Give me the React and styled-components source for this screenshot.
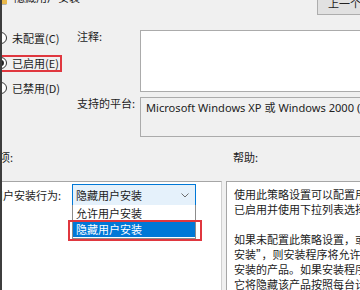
import React from 'react';
import styled, { createGlobalStyle } from 'styled-components';

const Global = createGlobalStyle`
  html, body { margin: 0; padding: 0; }
  body {
    width: 360px;
    height: 290px;
    overflow: hidden;
    background: #f0f0f0;
    font-family: "Noto Sans CJK SC", "Noto Sans", sans-serif;
  }
`;

const Dialog = styled.div`
  width: 360px;
  height: 290px;
  box-sizing: border-box;
  border-left: 2px solid #3d3d3d;
  background: #f0f0f0;
  overflow: hidden;
  display: flex;
  flex-direction: column;
  font-size: 11px;
  line-height: 12px;
  color: #1c1c1c;
`;

const TitleBar = styled.div`
  height: 16px;
  display: flex;
  align-items: flex-start;
  flex-shrink: 0;
`;

const TitleIcon = styled.svg`
  width: 12px;
  height: 12px;
  margin: -7px 0 0 -6px;
  flex-shrink: 0;
`;

const TitleText = styled.div`
  margin: -9px 0 0 6px;
  font-size: 11px;
  color: #222;
`;

const NavButton = styled.div`
  margin: -10px -20px 0 auto;
  width: 63px;
  height: 25px;
  box-sizing: border-box;
  border: 1px solid #adadad;
  background: #e1e1e1;
  display: flex;
  align-items: center;
  justify-content: flex-start;
  padding-left: 10px;
  color: #222;
`;

const Upper = styled.div`
  display: flex;
  padding-top: 14px;
  flex-shrink: 0;
`;

const RadioGroup = styled.div`
  width: 75px;
  flex-shrink: 0;
  display: flex;
  flex-direction: column;
  gap: 9px;
`;

const RadioRow = styled.div`
  position: relative;
  display: flex;
  align-items: center;
  gap: 5px;
  height: 16px;
  margin-left: -7px;
  &::after {
    content: '';
    display: ${(p) => (p.$marked ? 'block' : 'none')};
    position: absolute;
    left: 5px;
    top: 0;
    width: 62px;
    height: 17px;
    box-sizing: border-box;
    border: 2px solid #e0373f;
  }
`;

const RadioCircle = styled.span`
  width: 12px;
  height: 12px;
  box-sizing: border-box;
  border-radius: 50%;
  border: 1px solid #333;
  background: #fff;
  display: flex;
  align-items: center;
  justify-content: center;
  flex-shrink: 0;
  &::before {
    content: '';
    display: ${(p) => (p.$checked ? 'block' : 'none')};
    width: 6px;
    height: 6px;
    border-radius: 50%;
    background: #222;
  }
`;

const Form = styled.div`
  flex: 1;
  display: grid;
  grid-template-columns: 63px 1fr;
  grid-template-rows: 62px 40px;
  row-gap: 5px;
  margin-right: -12px;
`;

const FieldLabel = styled.div`
  padding-top: 0;
  line-height: 12px;
`;

const TextArea = styled.div`
  background: #fff;
  border: 1px solid #ababab;
`;

const ReadOnlyBox = styled.div`
  background: #f0f0f0;
  border: 1px solid #ababab;
  padding: 4px 0 0 5px;
  white-space: nowrap;
  overflow: hidden;
  font-family: "Noto Sans", "Noto Sans CJK SC", sans-serif;
  font-size: 11.1px;
  color: #222;
`;

const SectionRow = styled.div`
  display: grid;
  grid-template-columns: 220px 1fr;
  column-gap: 4px;
  margin-top: 14px;
  height: 12px;
  flex-shrink: 0;
`;

const SectionLabel = styled.div`
  margin-left: ${(p) => p.$offset || 0}px;
  white-space: nowrap;
`;

const Panes = styled.div`
  display: grid;
  grid-template-columns: 220px 1fr;
  column-gap: 4px;
  margin-top: 18px;
  height: 130px;
  flex-shrink: 0;
  margin-right: -20px;
`;

const OptionsPane = styled.div`
  background: #fff;
  border-top: 1px solid #a6a6a6;
  border-right: 1px solid #cfcfcf;
  padding-top: 2px;
`;

const OptionRow = styled.div`
  display: flex;
  align-items: center;
`;

const OptionLabel = styled.div`
  flex: 0 0 80px;
  margin-left: -10px;
  white-space: nowrap;
`;

const Combo = styled.div`
  position: relative;
  width: 124px;
  height: 22px;
  box-sizing: border-box;
  border: 1px solid #0078d7;
  background: #e5f1fb;
  display: flex;
  align-items: center;
  padding: 0 6px 0 3px;
`;

const ComboText = styled.span`
  flex: 1;
  color: #1a1a1a;
`;

const Chevron = styled.svg`
  width: 8px;
  height: 5px;
`;

const DropList = styled.div`
  position: absolute;
  top: 100%;
  left: -1px;
  width: 124px;
  box-sizing: border-box;
  background: #fff;
  border: 1px solid #8c8c8c;
  border-top: none;
  padding-bottom: 1px;
  z-index: 2;
`;

const DropItem = styled.div`
  position: relative;
  height: 16px;
  display: flex;
  align-items: center;
  padding-left: 3px;
  background: ${(p) => (p.$selected ? '#0078d7' : 'transparent')};
  color: ${(p) => (p.$selected ? '#fff' : '#1a1a1a')};
  &::after {
    content: '';
    display: ${(p) => (p.$marked ? 'block' : 'none')};
    position: absolute;
    left: -5px;
    right: -7px;
    top: -1px;
    bottom: -4px;
    border: 2px solid #e0373f;
  }
`;

const HelpPane = styled.div`
  background: #fff;
  border: 1px solid #a6a6a6;
  padding: 5px 0 0 7px;
  line-height: 15px;
  overflow: hidden;
`;

const HelpLine = styled.div`
  white-space: nowrap;
  min-height: 15px;
`;

const helpLines = [
  '使用此策略设置可以配置用户安装',
  '已启用并使用下拉列表选择显示',
  '',
  '如果未配置此策略设置，或者选择',
  '安装”，则安装程序将允许用户安装',
  '安装的产品。如果安装程序检测到',
  '它将隐藏该产品按照每台计算机',
];

export default function App() {
  return (
    <>
      <Global />
      <Dialog>
        <TitleBar>
          <TitleIcon viewBox="0 0 12 12">
            <rect x="1" y="1" width="9" height="10" fill="#fff" stroke="#777" />
            <rect x="6" y="6" width="5" height="5" fill="#e8b84a" />
          </TitleIcon>
          <TitleText>隐藏用户安装</TitleText>
          <NavButton>上一个</NavButton>
        </TitleBar>

        <Upper>
          <RadioGroup>
            <RadioRow>
              <RadioCircle />
              <span>未配置(C)</span>
            </RadioRow>
            <RadioRow $marked>
              <RadioCircle $checked />
              <span>已启用(E)</span>
            </RadioRow>
            <RadioRow>
              <RadioCircle />
              <span>已禁用(D)</span>
            </RadioRow>
          </RadioGroup>
          <Form>
            <FieldLabel>注释:</FieldLabel>
            <TextArea />
            <FieldLabel>支持的平台:</FieldLabel>
            <ReadOnlyBox>Microsoft Windows XP 或 Windows 2000 (Windows Installer v2.0)</ReadOnlyBox>
          </Form>
        </Upper>

        <SectionRow>
          <SectionLabel $offset={-14}>选项:</SectionLabel>
          <SectionLabel $offset={7}>帮助:</SectionLabel>
        </SectionRow>

        <Panes>
          <OptionsPane>
            <OptionRow>
              <OptionLabel>用户安装行为:</OptionLabel>
              <Combo>
                <ComboText>隐藏用户安装</ComboText>
                <Chevron viewBox="0 0 8 5">
                  <polyline points="0.5,0.5 4,4 7.5,0.5" fill="none" stroke="#6d6d6d" strokeWidth="1" />
                </Chevron>
                <DropList>
                  <DropItem>允许用户安装</DropItem>
                  <DropItem $selected $marked>隐藏用户安装</DropItem>
                </DropList>
              </Combo>
            </OptionRow>
          </OptionsPane>
          <HelpPane>
            {helpLines.map((l, i) => (
              <HelpLine key={i}>{l}</HelpLine>
            ))}
          </HelpPane>
        </Panes>
      </Dialog>
    </>
  );
}
